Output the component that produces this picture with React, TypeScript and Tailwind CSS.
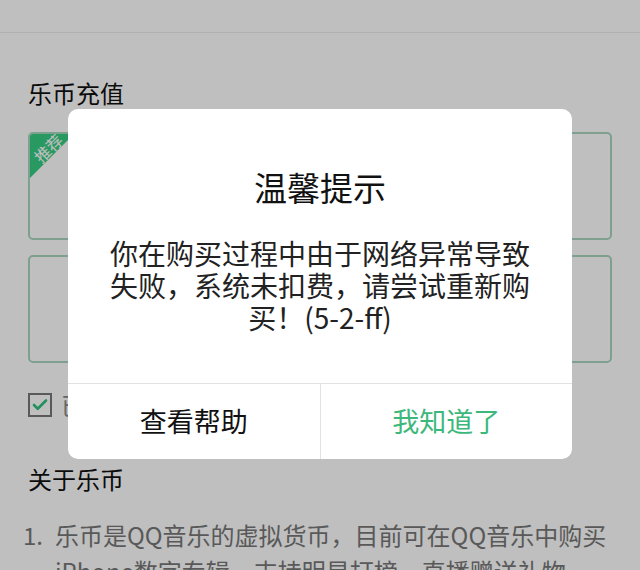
import { Check } from 'lucide-react'

const font = { fontFamily: '"Noto Sans CJK SC", "Noto Sans", sans-serif' }

function RechargeCard({ recommended }: { recommended?: boolean }) {
  return (
    <div className="relative h-[108px] rounded-[5px] border-2 border-[#a8d6bf] overflow-hidden">
      {recommended && (
        <div className="absolute left-0 top-0 w-[44px] h-[44px]">
          <svg width="44" height="44" viewBox="0 0 44 44" className="absolute inset-0">
            <polygon points="0,0 44,0 0,44" fill="#37cc83" />
          </svg>
          <span className="absolute left-[-2px] top-[5px] w-[40px] text-center text-[16px] leading-[18px] text-white -rotate-45">
            推荐
          </span>
        </div>
      )}
    </div>
  )
}

export default function App() {
  return (
    <div className="relative w-[640px] h-[570px] overflow-hidden bg-white" style={font}>
      {/* page underneath */}
      <div className="h-[33px] border-b border-[#ececec]" />
      <div className="px-[28px]">
        <h2 className="mt-[44px] text-[24px] leading-[32px] text-[#111]">乐币充值</h2>
        <div className="mt-[23px] flex flex-col gap-[15px]">
          <RechargeCard recommended />
          <RechargeCard />
        </div>
        <div className="mt-[26px] flex items-center gap-[9px]">
          <div className="w-[24px] h-[24px] border-2 border-[#777] flex items-center justify-center">
            <Check size={18} strokeWidth={3.5} color="#31c27c" />
          </div>
          <span className="text-[24px] leading-[32px] text-[#888]">已阅读并同意</span>
        </div>
        <h2 className="mt-[42px] text-[24px] leading-[32px] text-[#111]">关于乐币</h2>
        <div className="mt-[22px] -ml-[5px] flex text-[24px] leading-[36px] text-[#777]">
          <span className="w-[32px] shrink-0">1.</span>
          <p>乐币是QQ音乐的虚拟货币，目前可在QQ音乐中购买iPhone数字专辑、支持明星打榜、直播赠送礼物、参与活动等。</p>
        </div>
      </div>

      {/* overlay + dialog */}
      <div className="absolute inset-0 bg-black/25">
        <div className="absolute left-[68px] top-[109px] w-[504px] rounded-[10px] bg-white overflow-hidden">
          <div className="pt-[58px] pb-[50px] px-[40px] text-center">
            <h3 className="text-[33px] leading-[40px] text-[#111]">温馨提示</h3>
            <p className="mt-[30px] text-[28px] leading-[32px] text-[#222]">
              你在购买过程中由于网络异常导致失败，系统未扣费，请尝试重新购买！(5-2-ff)
            </p>
          </div>
          <div className="flex h-[76px] border-t border-[#e2e2e2]">
            <button type="button" className="flex-1 border-r border-[#e2e2e2] text-[27px] text-[#111]">
              查看帮助
            </button>
            <button type="button" className="flex-1 text-[27px] text-[#3bb87a]">
              我知道了
            </button>
          </div>
        </div>
      </div>
    </div>
  )
}
